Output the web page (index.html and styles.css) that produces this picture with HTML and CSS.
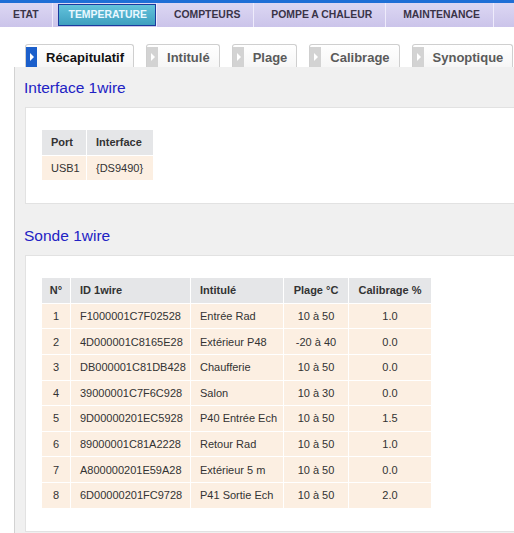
FILE: index.html
```html
<!DOCTYPE html>
<html lang="fr">
<head>
    <meta charset="UTF-8">
    <meta name="viewport" content="width=device-width, initial-scale=1.0">
    <title>Température - Sondes 1wire</title>
    <link rel="stylesheet" href="styles.css">
</head>
<body>

<!-- Menu principal -->
<ul class="menu">
    <li><a href="#">ETAT</a></li>
    <li class="active"><a href="#">TEMPERATURE</a></li>
    <li><a href="#">COMPTEURS</a></li>
    <li><a href="#">POMPE A CHALEUR</a></li>
    <li><a href="#">MAINTENANCE</a></li>
</ul>

<div class="page">
    <!-- Onglets -->
    <ul class="tabs">
        <li class="selected"><span class="arrow"></span>Récapitulatif</li>
        <li><span class="arrow"></span>Intitulé</li>
        <li><span class="arrow"></span>Plage</li>
        <li><span class="arrow"></span>Calibrage</li>
        <li><span class="arrow"></span>Synoptique</li>
    </ul>

    <div class="panel">
        <h3>Interface 1wire</h3>
        <div class="box">
            <table class="grid">
                <thead>
                    <tr>
                        <th class="c-port">Port</th>
                        <th class="c-iface">Interface</th>
                    </tr>
                </thead>
                <tbody>
                    <tr>
                        <td>USB1</td>
                        <td>{DS9490}</td>
                    </tr>
                </tbody>
            </table>
        </div>

        <h3>Sonde 1wire</h3>
        <div class="box">
            <table class="grid">
                <thead>
                    <tr>
                        <th class="center c-num">N°</th>
                        <th class="c-id">ID 1wire</th>
                        <th class="c-name">Intitulé</th>
                        <th class="center c-range">Plage °C</th>
                        <th class="center c-calib">Calibrage %</th>
                    </tr>
                </thead>
                <tbody>
                    <tr><td class="center">1</td><td>F1000001C7F02528</td><td>Entrée Rad</td><td class="center">10 à 50</td><td class="center">1.0</td></tr>
                    <tr><td class="center">2</td><td>4D000001C8165E28</td><td>Extérieur P48</td><td class="center">-20 à 40</td><td class="center">0.0</td></tr>
                    <tr><td class="center">3</td><td>DB000001C81DB428</td><td>Chaufferie</td><td class="center">10 à 50</td><td class="center">0.0</td></tr>
                    <tr><td class="center">4</td><td>39000001C7F6C928</td><td>Salon</td><td class="center">10 à 30</td><td class="center">0.0</td></tr>
                    <tr><td class="center">5</td><td>9D00000201EC5928</td><td>P40 Entrée Ech</td><td class="center">10 à 50</td><td class="center">1.5</td></tr>
                    <tr><td class="center">6</td><td>89000001C81A2228</td><td>Retour Rad</td><td class="center">10 à 50</td><td class="center">1.0</td></tr>
                    <tr><td class="center">7</td><td>A800000201E59A28</td><td>Extérieur 5 m</td><td class="center">10 à 50</td><td class="center">0.0</td></tr>
                    <tr><td class="center">8</td><td>6D00000201FC9728</td><td>P41 Sortie Ech</td><td class="center">10 à 50</td><td class="center">2.0</td></tr>
                </tbody>
            </table>
        </div>
    </div>
</div>

</body>
</html>
```

FILE: styles.css
```css
body {
    margin: 0;
    padding: 0;
    font-family: "Liberation Sans", Arial, sans-serif;
    background-color: #fff;
    overflow: hidden;
}

/* Menu du haut */
.menu {
    display: flex;
    list-style: none;
    margin: 0;
    padding: 0;
    height: 24px;
    border-top: 3px solid #1f6fd6;
    background: linear-gradient(#dcd7f3, #cbc4ea);
}
.menu li {
    margin-right: 4px;
    border-right: 1px solid #eeebfb;
}
.menu a {
    display: block;
    padding: 0 13px;
    line-height: 24px;
    font-size: 10.4px;
    font-weight: bold;
    color: #3a3448;
    text-decoration: none;
}
.menu li:first-child {
    margin-right: 5px;
}
.menu li.active a {
    padding: 0 8px 0 10px;
    line-height: 20px;
    margin-top: 1px;
    border: 1px solid #1b3b9e;
    background: linear-gradient(#63c3dc, #3e9fbf);
    color: #eaf8ff;
}

.page {
    padding-top: 17px;
    padding-left: 14px;
}

/* Onglets */
.tabs {
    display: flex;
    gap: 12px;
    list-style: none;
    margin: 0 0 0 11px;
    padding: 0;
}
.tabs li {
    display: flex;
    align-items: center;
    height: 20px;
    padding: 2px 9px 0 0;
    border: 1px solid #cfcfcf;
    border-bottom: none;
    border-radius: 3px 3px 0 0;
    background: linear-gradient(#ffffff, #f6f6f6);
    font-size: 13px;
    font-weight: bold;
    color: #5a5a5a;
}
.tabs .arrow {
    position: relative;
    width: 11px;
    height: 20px;
    margin-right: 9px;
    background-color: #d3d3d3;
}
.tabs .arrow::before {
    content: "";
    position: absolute;
    left: 4px;
    top: 6px;
    border-left: 4px solid #fff;
    border-top: 4px solid transparent;
    border-bottom: 4px solid transparent;
}
.tabs li.selected {
    color: #111;
}
.tabs li.selected .arrow {
    background-color: #1b5fcb;
}

/* Panneau */
.panel {
    min-height: 480px;
    padding: 11px 0 0 10px;
    border-left: 1px solid #d2d2d2;
    background-color: #f0f0f0;
}
.panel h3 {
    margin: 0 0 9px -1px;
    font-size: 15.5px;
    font-weight: normal;
    line-height: 20px;
    color: #2222c4;
}
.box {
    padding: 21px 0 22px 16px;
    margin-bottom: 22px;
    border: 1px solid #e2e2e2;
    border-right: none;
    background-color: #fff;
}

table.grid {
    border-collapse: separate;
    border-spacing: 1px;
    margin-left: -1px;
    font-size: 11px;
}
.grid th, .grid td {
    height: 24.6px;
    padding: 0 4px 0 9px;
    text-align: left;
    color: #333;
}
.grid th {
    background-color: #e5e6e8;
    font-weight: bold;
}
.grid td {
    background-color: #fcefe2;
}
.grid .center {
    padding: 0 6px;
    text-align: center;
}
.grid .c-port { width: 31px; }
.grid .c-iface { width: 53px; }
.grid .c-num { width: 16px; }
.grid .c-id { width: 106px; }
.grid .c-name { width: 79px; }
.grid .c-range { width: 52px; }
.grid .c-calib { width: 70px; }
```
